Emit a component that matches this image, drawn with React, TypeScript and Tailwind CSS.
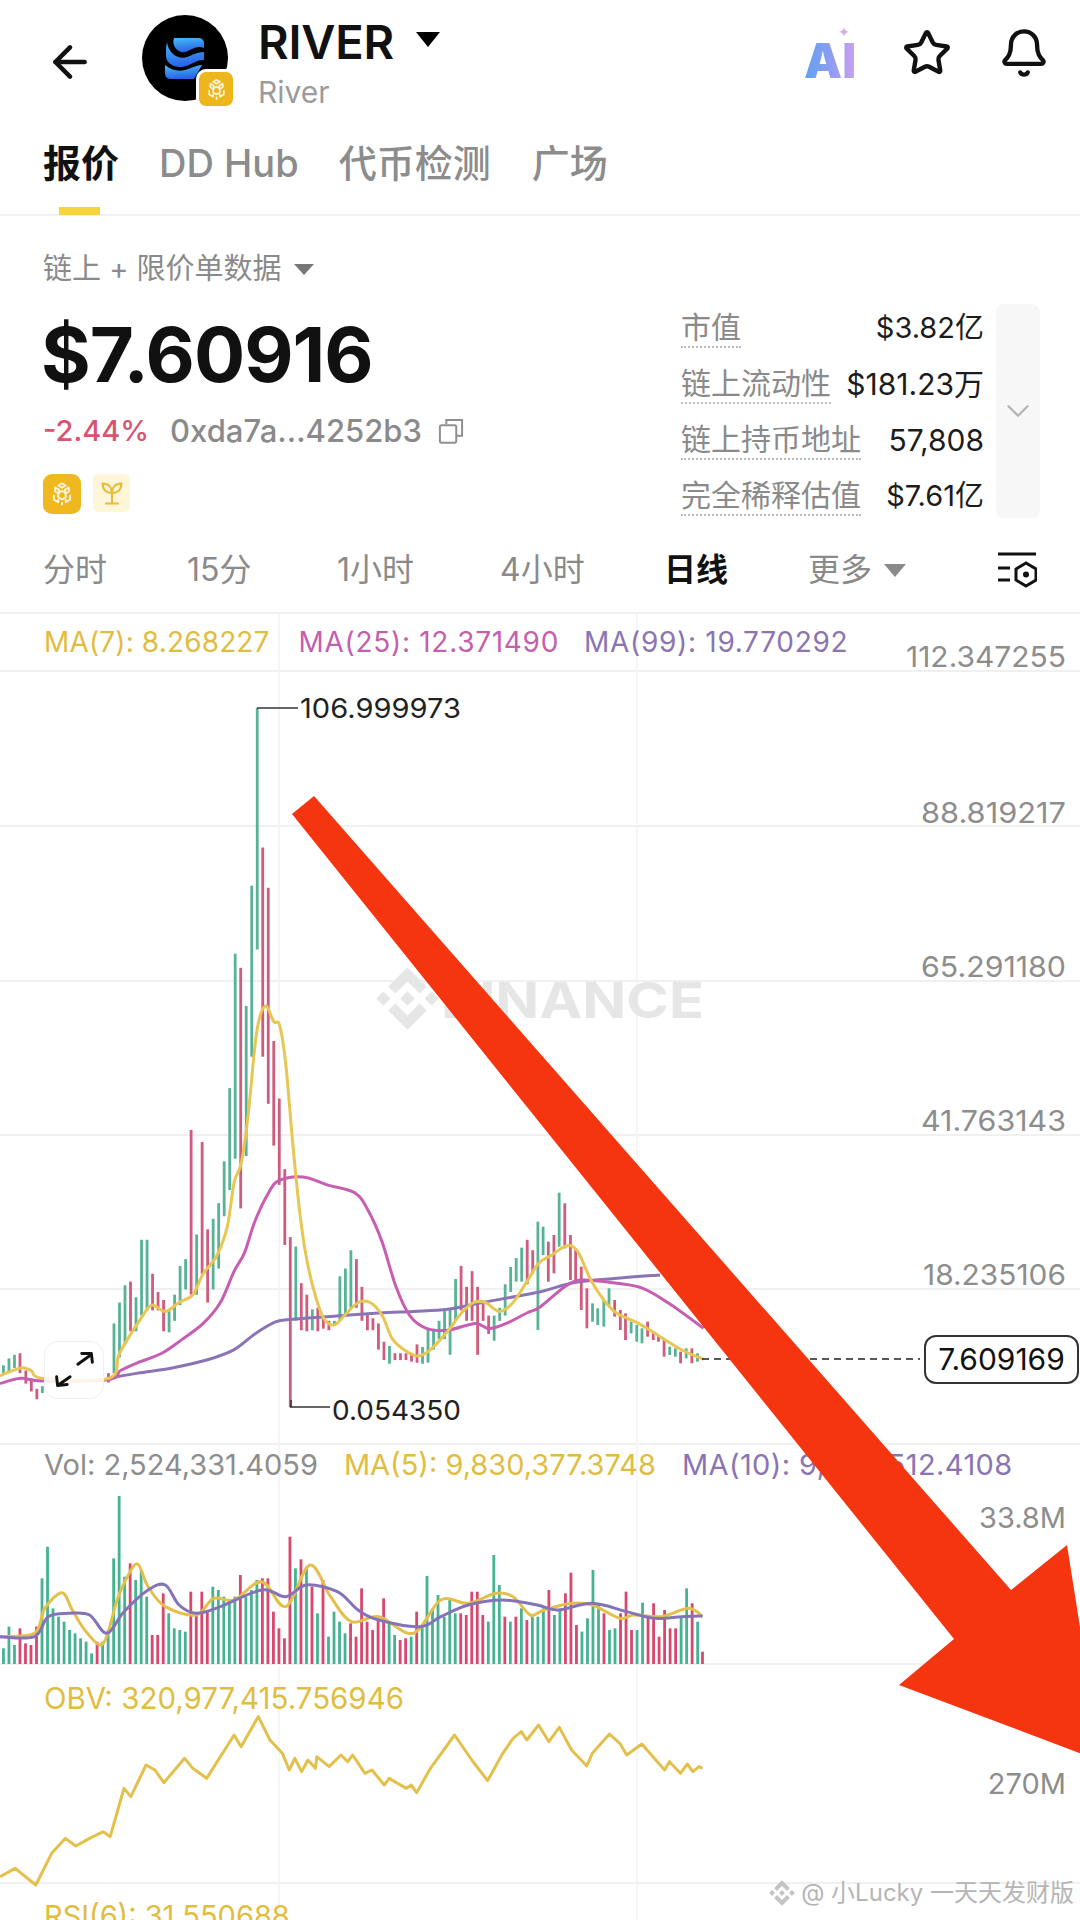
import React from "react";
import { ArrowLeft, Star, Bell, ChevronDown } from "lucide-react";

type C = [number, number, number, 0 | 1];
const G = "#58b295";
const R = "#cf5c7c";
const z2 = (x: number, y: number): [number, number] => [x / 2.904, 620 + y / 1.912];
const z3 = (x: number, y: number): [number, number] => [400 + x / 2.306, 1100 + y / 3];
const z4 = (x: number, y: number): [number, number] => [x / 1.452, 1440 + y / 3];

const c2: C[] = [[10,1425,1440,1],[26,1412,1440,1],[42,1405,1430,1],[58,1402,1440,0],[75,1435,1460,0],[91,1450,1475,0],[107,1470,1490,0],[123,1465,1478,1],[315,1440,1458,0],[331,1345,1440,1],[347,1305,1410,1],[363,1272,1385,1],[379,1265,1360,0],[395,1295,1360,1],[411,1185,1330,1],[427,1185,1320,1],[443,1250,1320,0],[459,1285,1320,0],[475,1300,1360,0],[491,1320,1362,1],[507,1290,1340,1],[523,1235,1310,1],[539,1222,1280,1],[555,975,1290,0],[571,1175,1290,1],[587,998,1250,0],[603,1165,1305,0],[619,1145,1280,1],[635,1115,1240,1],[651,1035,1140,1],[667,895,1090,1],[683,638,1030,1],[699,665,1125,0],[715,738,1025,1],[731,508,835,1],[747,168,630,1],[763,435,835,0],[779,512,925,0],[795,805,1005,0],[811,915,1080,0],[827,1050,1195,0],[843,1180,1505,0],[859,1198,1340,1],[875,1268,1358,0],[891,1290,1360,0],[907,1318,1358,1],[923,1315,1360,0],[939,1335,1355,0],[955,1340,1358,0],[971,1340,1350,1],[987,1255,1340,1],[1003,1240,1330,1],[1019,1205,1315,1],[1035,1222,1315,0],[1051,1275,1340,0],[1067,1325,1358,0],[1083,1335,1358,0],[1099,1345,1395,0],[1115,1380,1415,0],[1131,1388,1422,1],[1147,1402,1415,0],[1163,1402,1415,0],[1179,1402,1415,0],[1195,1402,1418,0],[1211,1385,1420,0],[1227,1390,1422,1],[1243,1355,1420,1],[1259,1355,1395,1],[1275,1340,1375,1],[1291,1318,1375,1],[1307,1318,1405,1],[1323,1260,1340,1],[1339,1235,1320,0],[1355,1275,1340,0],[1371,1245,1340,0],[1387,1275,1405,0],[1403,1305,1340,0],[1419,1330,1365,0],[1435,1330,1378,1],[1451,1315,1340,1],[1467,1270,1330,1],[1483,1237,1285,1],[1499,1220,1265,1],[1515,1200,1265,1],[1531,1185,1270,0],[1547,1205,1250,0]];
const c3: C[] = [[318,365,690,1],[330,380,465,1],[342,425,545,0],[355,405,520,0],[367,278,440,1],[380,310,445,0],[393,405,540,0],[405,445,545,0],[418,500,630,0],[431,565,685,0],[444,610,665,1],[456,625,675,1],[470,600,680,1],[482,565,620,1],[495,600,650,0],[508,630,690,0],[520,640,720,0],[533,665,700,1],[546,675,725,1],[558,685,730,1],[571,665,710,0],[584,695,720,0],[596,705,725,0],[609,720,770,0],[622,740,765,1],[635,745,770,1],[647,755,790,0],[660,745,775,1],[673,745,790,0],[686,760,785,1]];
const vol: [number, number, 0 | 1][] = [[5,625,1],[13,560,1],[21,615,1],[29,565,0],[37,610,0],[45,615,0],[53,560,0],[61,415,1],[69,320,1],[77,505,1],[85,530,1],[93,545,1],[101,570,1],[109,580,1],[117,595,1],[125,605,1],[133,640,1],[141,605,0],[149,605,1],[157,570,1],[165,355,1],[173,168,1],[181,410,1],[189,370,0],[197,420,1],[205,390,1],[213,470,1],[221,585,0],[229,585,0],[237,460,0],[245,520,1],[253,565,1],[261,570,1],[269,575,1],[277,455,0],[285,525,0],[293,455,0],[301,510,0],[309,440,1],[317,450,1],[325,470,1],[333,480,1],[341,470,1],[349,405,0],[357,470,1],[365,450,1],[373,420,1],[381,415,0],[389,415,0],[397,515,0],[405,565,0],[413,595,0],[421,290,0],[429,385,1],[437,358,0],[445,380,1],[453,440,0],[461,520,1],[469,420,0],[477,590,1],[485,515,1],[493,545,1],[501,580,1],[509,550,0],[517,590,0],[525,445,0],[533,545,0],[541,570,0],[549,530,0],[557,475,0],[565,550,1],[573,585,1],[581,600,0],[589,595,0],[597,590,1],[605,515,0],[613,560,1],[620,408,1],[628,510,1],[636,465,1],[645,530,1],[653,480,1],[661,520,1],[669,520,0],[677,525,0],[685,455,0],[693,455,0],[701,525,0],[709,545,1],[717,345,1],[725,435,1],[733,530,0],[741,545,1],[749,530,0],[757,505,1],[765,540,0],[773,530,1],[781,530,1],[789,505,1],[797,450,0],[805,525,1],[813,510,1],[821,460,0],[829,398,0],[837,555,0],[845,575,1],[853,535,1],[861,390,1],[869,495,1],[877,520,0],[885,570,1],[893,565,1],[901,520,0],[909,455,0],[917,570,0],[925,570,1],[933,488,1],[941,530,0],[949,490,0],[957,590,0],[965,510,0],[973,565,0],[981,565,0],[989,530,1],[997,445,1],[1005,490,0],[1013,545,1],[1020,635,0]];

const ma7 = [...[[0,1445],[60,1430],[90,1435],[125,1450],[315,1450],[345,1405],[380,1365],[410,1335],[440,1310],[480,1322],[520,1305],[560,1290],[590,1250],[630,1215],[660,1160],[680,1075],[700,1040],[720,950],[745,790],[770,738],[795,768],[812,775],[830,850],[850,1000],[870,1130],[890,1220],[915,1290],[940,1335],[970,1348],[1000,1330],[1040,1305],[1075,1305],[1110,1330],[1140,1375],[1180,1398],[1215,1407],[1250,1395],[1300,1360],[1340,1325],[1375,1305],[1410,1305],[1450,1322],[1490,1305],[1530,1265]].map(([x,y]) => z2(x,y)), ...[[320,490],[350,465],[385,437],[410,455],[440,540],[470,600],[500,640],[550,670],[600,710],[650,750],[700,778]].map(([x,y]) => z3(x,y))];
const ma25 = [...[[0,1460],[60,1450],[125,1455],[315,1452],[350,1435],[400,1420],[470,1402],[530,1375],[590,1345],[640,1305],[680,1245],[710,1210],[740,1150],[780,1095],[810,1072],[880,1065],[950,1080],[1030,1095],[1070,1130],[1110,1190],[1150,1275],[1190,1330],[1240,1355],[1300,1358],[1380,1345],[1420,1355],[1470,1345],[1530,1325]].map(([x,y]) => z2(x,y)), ...[[324,620],[380,560],[420,540],[500,550],[560,565],[620,610],[700,685]].map(([x,y]) => z3(x,y))];
const ma99 = [...[[315,1450],[400,1440],[500,1430],[600,1415],[680,1395],[740,1365],[800,1342],[850,1337],[950,1332],[1100,1325],[1200,1322],[1300,1318],[1400,1305]].map(([x,y]) => z2(x,y)), ...[[324,575],[400,548],[500,535],[600,525]].map(([x,y]) => z3(x,y))];
const v5 = [[0,590],[50,580],[65,505],[90,458],[105,510],[125,575],[150,610],[170,480],[185,410],[200,372],[215,440],[240,500],[285,525],[310,475],[340,480],[380,425],[415,500],[450,375],[480,470],[510,545],[550,530],[600,580],[640,480],[680,490],[720,460],[745,470],[770,525],[790,510],[830,490],[860,495],[900,535],[920,525],[960,530],[1000,505],[1020,530]].map(([x,y]) => z4(x,y));
const v10 = [[0,590],[50,590],[70,530],[100,520],[130,525],[155,580],[180,515],[215,450],[240,435],[260,495],[285,520],[320,500],[380,450],[415,470],[445,435],[490,455],[520,510],[550,540],[610,560],[640,530],[680,495],[730,480],[780,495],[810,510],[860,490],[910,515],[950,535],[990,530],[1020,528]].map(([x,y]) => z4(x,y));
const obv = [[0,1310],[22,1285],[52,1335],[75,1240],[95,1195],[110,1218],[130,1195],[150,1175],[160,1190],[180,1045],[190,1070],[212,975],[225,990],[238,1028],[268,955],[280,985],[300,1015],[340,885],[350,920],[375,830],[392,900],[410,940],[420,990],[428,955],[438,995],[447,960],[458,985],[460,950],[478,980],[495,945],[505,965],[512,945],[530,1000],[540,990],[558,1035],[565,1015],[590,1045],[597,1035],[605,1058],[625,985],[660,885],[685,960],[708,1022],[730,940],[745,895],[757,875],[765,900],[782,855],[797,905],[812,862],[830,930],[852,978],[860,940],[885,882],[900,910],[910,945],[920,930],[932,912],[950,955],[965,990],[972,965],[988,1000],[998,972],[1006,995],[1015,980],[1020,985]].map(([x,y]) => z4(x,y));

const BNB_D = "M38.73 53.2L63 28.93l24.28 24.28 14.12-14.12L63 .69 24.61 39.08zM.69 63l14.12-14.12L28.93 63 14.81 77.12zM38.73 72.8L63 97.07l24.28-24.28 14.12 14.11L63 125.31 24.61 86.92zM97.07 63l14.12-14.12L125.31 63l-14.12 14.12zM77.32 63L63 48.68 52.41 59.27l-1.22 1.22-2.5 2.51L63 77.32z";

function smooth(p: number[][]) {
  let d = `M${p[0][0]} ${p[0][1]}`;
  for (let i = 0; i < p.length - 1; i++) {
    const a = p[Math.max(0, i - 1)], b = p[i], c = p[i + 1], e = p[Math.min(p.length - 1, i + 2)];
    d += `C${b[0] + (c[0] - a[0]) / 6} ${b[1] + (c[1] - a[1]) / 6} ${c[0] - (e[0] - b[0]) / 6} ${c[1] - (e[1] - b[1]) / 6} ${c[0]} ${c[1]}`;
  }
  return d;
}

function BnbIcon({ className }: { className: string }) {
  return (
    <svg viewBox="0 0 24 24" className={className} fill="none" stroke="#fff" strokeWidth="1.5" strokeLinejoin="round" opacity="0.85">
      <path d="M12 3.5l3 1.7-3 1.7-3-1.7zM6.5 6.8l3 1.7v3.2L6.5 10zM17.5 6.8l-3 1.7v3.2l3-1.7zM12 9.5l3 1.7v3.4l-3 1.8-3-1.8v-3.4zM5.5 12.5v4l3.5 2v-2.6M18.5 12.5v4l-3.5 2v-2.6M12 18.5v2.500" />
    </svg>
  );
}

function Chart() {
  const lab = "#8d8d8d";
  return (
    <svg viewBox="0 612 1080 1308" className="absolute inset-0 w-[1080px] h-[1308px]">
      {[613, 671, 826, 981, 1135, 1289, 1444, 1664, 1883].map((y) => (
        <line key={y} x1="0" x2="1080" y1={y} y2={y} stroke="#f0f0f0" strokeWidth="2" />
      ))}
      {[279, 637].map((x) => (
        <line key={x} x1={x} x2={x} y1="612" y2="1920" stroke="#f3f3f3" strokeWidth="1.5" />
      ))}
      <g fill="#e6e6e6">
        <path d={BNB_D} transform="translate(376 967) scale(0.5)" />
        <text x="441" y="1018" fontSize="50" fontWeight="700" textLength="263" lengthAdjust="spacingAndGlyphs">BINANCE</text>
      </g>
      {c2.map(([x, a, b, g], i) => {
        const [px, t] = z2(x, a);
        const [, bt] = z2(x, b);
        return <rect key={i} x={px - 1.4} y={t} width="2.8" height={bt - t} fill={g ? G : R} />;
      })}
      {c3.map(([x, a, b, g], i) => {
        const [px, t] = z3(x, a);
        const [, bt] = z3(x, b);
        return <rect key={i} x={px - 1.4} y={t} width="2.8" height={bt - t} fill={g ? G : R} />;
      })}
      <path d={smooth(ma99)} fill="none" stroke="#8a74b6" strokeWidth="3" />
      <path d={smooth(ma25)} fill="none" stroke="#c75eb2" strokeWidth="3" />
      <path d={smooth(ma7)} fill="none" stroke="#e7c653" strokeWidth="3" />
      <path d="M257 708H298" fill="none" stroke="#333" strokeWidth="1.5" />
      <path d="M290 1407H330M291 1407V1400" fill="none" stroke="#333" strokeWidth="1.5" />
      <text x="300" y="718" fontSize="27" fill="#222" textLength="161" lengthAdjust="spacingAndGlyphs">106.999973</text>
      <text x="332" y="1420" fontSize="27" fill="#222" textLength="129" lengthAdjust="spacingAndGlyphs">0.054350</text>
      <line x1="702" x2="920" y1="1359" y2="1359" stroke="#222" strokeWidth="1.6" strokeDasharray="7 5" />
      <g fontSize="29" fill={lab} textAnchor="end">
        <text x="1066" y="667" textLength="160" lengthAdjust="spacingAndGlyphs">112.347255</text>
        <text x="1066" y="823" textLength="145" lengthAdjust="spacingAndGlyphs">88.819217</text>
        <text x="1066" y="977" textLength="145" lengthAdjust="spacingAndGlyphs">65.291180</text>
        <text x="1066" y="1131" textLength="145" lengthAdjust="spacingAndGlyphs">41.763143</text>
        <text x="1066" y="1285" textLength="143" lengthAdjust="spacingAndGlyphs">18.235106</text>
        <text x="1066" y="1528">33.8M</text>
        <text x="1066" y="1794">270M</text>
      </g>
      {vol.map(([x, y, g], i) => {
        const [px, t] = z4(x, y);
        return <rect key={i} x={px - 1.4} y={t} width="2.8" height={1664 - t} fill={g ? "#45b391" : "#d8486e"} />;
      })}
      <path d={smooth(v5)} fill="none" stroke="#e3c04b" strokeWidth="3" />
      <path d={smooth(v10)} fill="none" stroke="#8473b8" strokeWidth="3" />
      <polyline points={obv.map((p) => p.join(",")).join(" ")} fill="none" stroke="#e3c04b" strokeWidth="3" strokeLinejoin="round" />
    </svg>
  );
}

function Stat({ k, v, sm }: { k: string; v: string; sm?: boolean }) {
  return (
    <div className="flex justify-between items-center h-[56px] text-[30px]">
      <span className="text-[#8a8a8a] leading-[38px] border-b-2 border-dotted border-[#bdbdbd]">{k}</span>
      <span className={sm ? "text-[#1c1c1c] leading-[38px] text-[29px]" : "text-[#1c1c1c] leading-[38px]"}>{v}</span>
    </div>
  );
}

export default function App() {
  return (
    <div className="relative w-[1080px] h-[1920px] overflow-hidden bg-white font-['Inter','Noto_Sans_CJK_SC',sans-serif] text-[#111]">
      <header className="flex items-start h-[122px]">
        <ArrowLeft className="w-[50px] h-[50px] ml-[45px] mt-[37px]" strokeWidth={2.2} color="#111" />
        <div className="relative w-[86px] h-[86px] rounded-full bg-black ml-[47px] mt-[15px] shrink-0">
          <svg viewBox="0 0 86 86" className="w-[86px] h-[86px]">
            <defs>
              <linearGradient id="rv" x1="0" y1="0" x2="0.2" y2="1">
                <stop offset="0" stopColor="#45bdf5" />
                <stop offset="1" stopColor="#2a62e8" />
              </linearGradient>
            </defs>
            <path fill="url(#rv)" d="M32 23H57a5 5 0 0 1 5 5V33C52 29 47 39 39 37C33 35 30 29 32 23Z" />
            <path fill="url(#rv)" d="M25 27C26 38 36 45 45 42C50 40 56 37 62 37V45C54 44 48 52 38 52C30 52 24 47 24 41C24 36 24 31 25 27Z" />
            <path fill="url(#rv)" d="M23 50C30 56 38 57 46 54C52 52 56 50 60 50L52 64H29Q23 64 23 58Z" />
          </svg>
          <div className="absolute left-[54px] top-[54px] w-[34px] h-[34px] rounded-[10px] bg-[#eeb61d] border-[3px] border-white box-content flex items-center justify-center">
            <BnbIcon className="w-[27px] h-[27px]" />
          </div>
        </div>
        <div className="ml-[30px] mt-[17px]">
          <div className="flex items-center">
            <span className="text-[47px] leading-[50px] font-semibold tracking-[-0.2px]">RIVER</span>
            <span className="ml-[22px] mb-[6px] w-0 h-0 border-x-[12px] border-x-transparent border-t-[15px] border-t-black" />
          </div>
          <div className="text-[30px] leading-[40px] mt-[5px] text-[#9b9b9b]">River</div>
        </div>
        <div className="ml-auto flex items-center mt-[27px] mr-[30px]">
          <div className="relative w-[48px] h-[50px] mr-[50px]">
            <span className="absolute left-0 bottom-[-3px] text-[48px] leading-[40px] font-black bg-gradient-to-r from-[#5aa2f2] via-[#8c9cf2] to-[#c9a0ee] bg-clip-text text-transparent">AI</span>
            <span className="absolute right-[2px] -top-[3px] text-[14px] leading-[14px] text-[#d8a8e8]">✦</span>
          </div>
          <Star className="w-[50px] h-[50px] mr-[46px]" strokeWidth={2.1} color="#111" />
          <Bell className="w-[52px] h-[52px]" strokeWidth={2} color="#111" />
        </div>
      </header>

      <nav className="flex h-[94px] border-b-2 border-[#f1f1f1] px-[43px] text-[38px] leading-[82px] text-[#8c8c8c]">
        <div className="relative font-semibold text-[#111] mr-[40px]">
          报价
          <span className="absolute left-[16px] right-[19px] bottom-[-1px] h-[8px] bg-[#f8d33a]" />
        </div>
        <span className="font-medium mr-[40px]">DD Hub</span>
        <span className="font-medium mr-[41px]">代币检测</span>
        <span className="font-medium">广场</span>
      </nav>

      <section className="flex h-[302px] pl-[43px] pr-[40px]">
        <div className="flex-1 pt-[30px]">
          <div className="flex items-center text-[29px] leading-[46px] text-[#8a8a8a]">
            链上 + 限价单数据
            <span className="ml-[12px] w-0 h-0 border-x-[10px] border-x-transparent border-t-[11px] border-t-[#777]" />
          </div>
          <div className="text-[76px] leading-[80px] font-bold tracking-[-1px] mt-[22px] -ml-[2px]">$7.60916</div>
          <div className="flex items-center leading-[40px] mt-[17px]">
            <span className="text-[#d8546f] text-[29px] font-medium">-2.44%</span>
            <span className="ml-[21px] text-[#8a8a8a] text-[31px] font-medium">0xda7a...4252b3</span>
            <svg viewBox="0 0 24 24" className="w-[28px] h-[28px] ml-[15px]" fill="none" stroke="#8f8f8f" strokeWidth="1.7">
              <path d="M8 6V2.5h13.5V16H17" />
              <rect x="2.5" y="7" width="14" height="15" rx="1.5" />
            </svg>
          </div>
          <div className="flex mt-[23px]">
            <div className="w-[38px] h-[40px] rounded-[9px] bg-[#efb81f] flex items-center justify-center">
              <BnbIcon className="w-[30px] h-[30px]" />
            </div>
            <div className="w-[37px] h-[38px] ml-[12px] rounded-[6px] bg-[#fdf6d8] flex items-center justify-center">
              <svg viewBox="0 0 24 24" className="w-[28px] h-[28px]" fill="none" stroke="#e9bd3a" strokeWidth="1.8">
                <path d="M12 12v9M6 21h12M12 12C7 12 4 9 4 4c5 0 8 3 8 8zM12 12c5 0 8-3 8-8-5 0-8 3-8 8z" />
              </svg>
            </div>
          </div>
        </div>
        <div className="w-[303px] mt-[84px] h-[220px]">
          <Stat k="市值" v="$3.82亿" sm />
          <Stat k="链上流动性" v="$181.23万" />
          <Stat k="链上持币地址" v="57,808" />
          <Stat k="完全稀释估值" v="$7.61亿" sm />
        </div>
        <div className="w-[44px] h-[214px] ml-[12px] mt-[88px] rounded-[8px] bg-[#f7f7f7] flex items-center justify-center">
          <ChevronDown className="w-[38px] h-[38px]" strokeWidth={1.5} color="#b5b5b5" />
        </div>
      </section>

      <div className="flex items-center h-[94px] pt-[10px] text-[32px] text-[#8a8a8a] pl-[43px] pr-[43px]">
        <span className="w-[144px]">分时</span>
        <span className="w-[150px]">15分</span>
        <span className="w-[163px]">1小时</span>
        <span className="w-[164px]">4小时</span>
        <span className="w-[144px] font-semibold text-[#111]">日线</span>
        <span>更多</span>
        <span className="ml-[12px] w-0 h-0 border-x-[11px] border-x-transparent border-t-[13px] border-t-[#8a8a8a]" />
        <svg viewBox="0 0 40 40" className="ml-auto w-[40px] h-[40px]" fill="none" stroke="#111" strokeWidth="3">
          <path d="M1 4h38M1 18h12M1 30h12" />
          <path d="M29 13l10 6v11l-10 6-10-6V19z" />
          <circle cx="29" cy="24.500" r="3" fill="#111" stroke="none" />
        </svg>
      </div>

      <div className="relative h-[1308px]">
        <Chart />
        <div className="relative flex h-[59px] items-center pl-[44px] text-[28px]">
          <span className="text-[#e0bd3f] tracking-[0.15px]">MA(7): 8.268227</span>
          <span className="ml-[29px] text-[#c45fae] tracking-[0.7px]">MA(25): 12.371490</span>
          <span className="ml-[25px] text-[#8a74b2] tracking-[0.7px]">MA(99): 19.770292</span>
        </div>
        <div className="h-[773px]" />
        <div className="relative flex h-[42px] items-center pl-[44px] text-[29px]">
          <span className="text-[#8d8d8d]">Vol: 2,524,331.4059</span>
          <span className="ml-[26px] text-[#e0bd3f]">MA(5): 9,830,377.3748</span>
          <span className="ml-[26px] text-[#8a74b2] tracking-[0.4px]">MA(10): 9,830,512.4108</span>
        </div>
        <div className="h-[178px]" />
        <div className="relative flex h-[68px] items-center pl-[44px] text-[29.5px] text-[#e0bd3f]">OBV: 320,977,415.756946</div>
        <div className="h-[151px]" />
        <div className="relative flex h-[66px] items-center pl-[44px] text-[29px] text-[#e0bd3f]">RSI(6): 31.550688</div>
      </div>

      <div className="absolute left-[44px] top-[1341px] w-[60px] h-[58px] rounded-[14px] bg-white/85 border border-[#f0f0f0] flex items-center justify-center">
        <svg viewBox="0 0 60 58" className="w-[60px] h-[58px]" fill="none" stroke="#111" strokeWidth="3" strokeLinecap="round" strokeLinejoin="round">
          <path d="M34 23L48 13M38 12h10l1 9M26 36L13 45M12 36l1 9 10-1" />
        </svg>
      </div>

      <div className="absolute left-[924px] top-[1335px] w-[155px] h-[49px] rounded-[12px] border-2 border-[#333] bg-white flex items-center justify-center text-[30px] text-[#111]">7.609169</div>

      <svg viewBox="0 0 1080 1920" className="absolute inset-0 w-[1080px] h-[1920px] pointer-events-none">
        <polygon points="292,814 314,796 1011,1590 1067,1545 1082,1640 1082,1754 899,1685 954,1639" fill="#f4350f" />
      </svg>

      <div className="absolute right-[6px] top-[1876px] flex items-center text-[24px] leading-[34px] text-[#b5b5b5]">
        <svg viewBox="0 0 126 126" className="w-[26px] h-[26px] mr-[6px]" fill="#c4c4c4">
          <path d={BNB_D} />
        </svg>
        @ 小Lucky 一天天发财版
      </div>
    </div>
  );
}
